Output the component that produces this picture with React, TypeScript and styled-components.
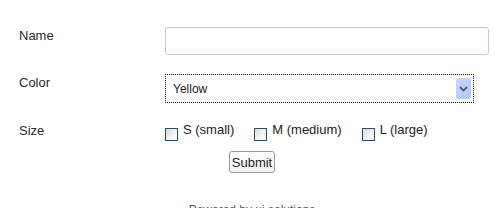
import React from 'react';
import styled, { createGlobalStyle } from 'styled-components';

const GlobalStyle = createGlobalStyle`
  html, body {
    margin: 0;
    padding: 0;
    background: #fff;
    overflow: hidden;
  }
  body {
    font-family: "Liberation Sans", Arial, sans-serif;
    font-size: 13px;
    color: #222;
  }
`;

const Page = styled.div`
  width: 504px;
  padding-top: 27px;
`;

const Form = styled.form`
  display: flex;
  flex-direction: column;
  gap: 19px;
  padding-left: 19px;
`;

const Row = styled.div`
  display: grid;
  grid-template-columns: 146px 1fr;
  align-items: start;
`;

const Label = styled.label`
  line-height: 16px;
  padding-top: 1px;
  color: #2a2a2a;
`;

const TextInput = styled.input`
  box-sizing: border-box;
  width: 324px;
  height: 28px;
  margin: 0;
  border: 1px solid #c9c9c9;
  border-radius: 3px;
  background: #fff;
  box-shadow: inset 0 1px 1px rgba(0, 0, 0, 0.04);
  outline: none;
`;

const SelectWrap = styled.div`
  position: relative;
  width: 309px;
  height: 29px;
`;

const Select = styled.select`
  box-sizing: border-box;
  width: 100%;
  height: 100%;
  margin: 0;
  padding: 0 0 0 7px;
  appearance: none;
  border: 1px dotted #111;
  border-radius: 0;
  background: #fff;
  font-family: "Liberation Sans", Arial, sans-serif;
  font-size: 12px;
  color: #222;
  outline: none;
`;

const DropButton = styled.span`
  position: absolute;
  top: 4px;
  right: 3px;
  width: 15px;
  height: 21px;
  border-radius: 2px;
  background: linear-gradient(135deg, #c9d8fd 0%, #b2c6f7 100%);
  display: flex;
  align-items: center;
  justify-content: center;
  pointer-events: none;
`;

const Options = styled.div`
  display: flex;
  align-items: flex-start;
`;

const Option = styled.label`
  display: flex;
  align-items: flex-start;
  margin-right: 20px;
  line-height: 16px;
  color: #222;
`;

const Checkbox = styled.input.attrs({ type: 'checkbox' })`
  appearance: none;
  box-sizing: border-box;
  width: 13px;
  height: 13px;
  margin: 6px 5px 0 0;
  border: 1px solid #1c5180;
  background: linear-gradient(135deg, #d9d9d4 0%, #f4f4f2 60%, #ffffff 100%);
`;

const Actions = styled.div`
  display: flex;
  justify-content: center;
  margin-top: 10px;
`;

const SubmitButton = styled.button`
  box-sizing: border-box;
  height: 22px;
  padding: 0 2px;
  border: 1px solid #9a9a9a;
  border-radius: 3px;
  background: linear-gradient(#ffffff, #f1f1ee);
  font-family: "Liberation Sans", Arial, sans-serif;
  font-size: 13px;
  color: #222;
`;

const Footer = styled.footer`
  margin-top: 29px;
  text-align: center;
  font-size: 12px;
  line-height: 16px;
  color: #555;
`;

const sizes = ['S (small)', 'M (medium)', 'L (large)'];

const App: React.FC = () => {
  return (
    <Page>
      <GlobalStyle />
      <Form onSubmit={e => e.preventDefault()}>
        <Row>
          <Label htmlFor='name'>Name</Label>
          <TextInput id='name' type='text' />
        </Row>
        <Row>
          <Label htmlFor='color'>Color</Label>
          <SelectWrap>
            <Select id='color' defaultValue='yellow'>
              <option value='yellow'>Yellow</option>
              <option value='red'>Red</option>
              <option value='blue'>Blue</option>
            </Select>
            <DropButton>
              <svg width='9' height='6' viewBox='0 0 9 6'>
                <path d='M1 1 L4.5 4.5 L8 1' fill='none' stroke='#4a5d82' strokeWidth='1.8' />
              </svg>
            </DropButton>
          </SelectWrap>
        </Row>
        <Row>
          <Label>Size</Label>
          <Options>
            {sizes.map(s => (
              <Option key={s}>
                <Checkbox />
                {s}
              </Option>
            ))}
          </Options>
        </Row>
      </Form>
      <Actions>
        <SubmitButton type='submit'>Submit</SubmitButton>
      </Actions>
      <Footer>Powered by ui solutions</Footer>
    </Page>
  );
}

export default App;
